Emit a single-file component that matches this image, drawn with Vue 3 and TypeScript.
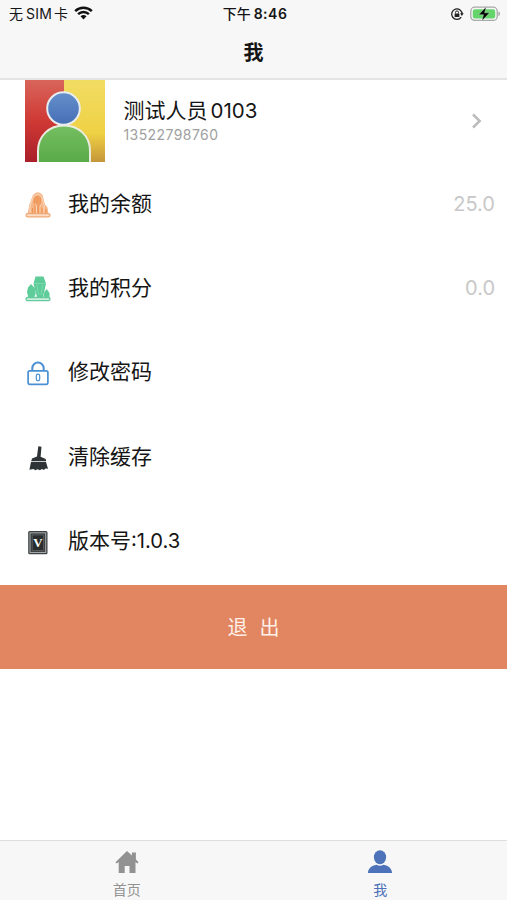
<script setup lang="ts">
interface Row {
  icon: 'balance' | 'points' | 'lock' | 'broom' | 'version'
  label: string
  suffix?: string
  value?: string
}

const rows: Row[] = [
  { icon: 'balance', label: '我的余额', value: '25.0' },
  { icon: 'points', label: '我的积分', value: '0.0' },
  { icon: 'lock', label: '修改密码' },
  { icon: 'broom', label: '清除缓存' },
  { icon: 'version', label: '版本号', suffix: ':1.0.3' },
]
</script>

<template>
  <div class="screen">
    <header class="header">
      <div class="status">
        <div class="carrier">
          <span>无</span><span class="sim">SIM</span><span>卡</span>
          <svg class="wifi" width="19" height="14" viewBox="0 0 19 14">
            <path d="M1.2 5.1a12 12 0 0 1 16.6 0M4.1 8.1a7.8 7.8 0 0 1 10.8 0" fill="none" stroke="#111" stroke-width="2.5" />
            <path d="M6.5 10.3a4.5 4.5 0 0 1 6 0L9.5 13.5z" fill="#111" />
          </svg>
        </div>
        <div class="time"><span>下午</span><b>8:46</b></div>
        <div class="indicators">
          <svg width="14" height="14" viewBox="0 0 14 14">
            <path d="M11.2 10.1A5.2 5.2 0 1 1 12.1 7.4" fill="none" stroke="#222" stroke-width="1.3" />
            <path d="M10.1 6.3h3.6l-1.8 2.8z" fill="#222" />
            <rect x="4.6" y="6.4" width="4.8" height="3.6" rx=".6" fill="#222" />
            <path d="M5.500 6.500V5.400a1.500 1.500 0 0 1 3 0v1.100" fill="none" stroke="#222" />
          </svg>
          <svg width="31" height="16" viewBox="0 0 31 16">
            <rect x=".8" y="1.200" width="26.400" height="13.200" rx="4" fill="#f7f7f7" stroke="#a9a9a9" stroke-width="1.300" />
            <rect x="2.800" y="3.200" width="22.400" height="9.200" rx="2.200" fill="#65d46b" />
            <path d="M28.400 5.500c2.200.5 2.200 4.100 0 4.600z" fill="#a9a9a9" />
            <path d="M16.300.8 8.700 8.700h4.800l-1.600 6.100 7.700-8h-5z" fill="#000" stroke="#d4f4d5" stroke-width=".4" />
          </svg>
        </div>
      </div>
      <h1 class="title">我</h1>
    </header>

    <main>
      <section class="profile">
        <svg class="avatar" width="80" height="82" viewBox="0 0 80 82">
          <defs>
            <linearGradient id="red" x2="0" y2="1"><stop stop-color="#d8655a" /><stop offset=".5" stop-color="#cf3934" /><stop offset="1" stop-color="#a91f29" /></linearGradient>
            <linearGradient id="gold" x2="0" y2="1"><stop stop-color="#f1dc63" /><stop offset=".65" stop-color="#efd144" /><stop offset="1" stop-color="#c4963a" /></linearGradient>
            <linearGradient id="blue" x2="0" y2="1"><stop stop-color="#6590cb" /><stop offset="1" stop-color="#456fb5" /></linearGradient>
            <linearGradient id="green" x2="0" y2="1"><stop stop-color="#75bf61" /><stop offset="1" stop-color="#59aa48" /></linearGradient>
          </defs>
          <rect width="39" height="82" fill="url(#red)" />
          <rect x="39" width="41" height="82" fill="url(#gold)" />
          <path d="M13 83V71c0-15 11-25.500 26-25.500S65 56 65 71v12z" fill="url(#green)" stroke="#e9ecdf" stroke-width="2" />
          <circle cx="38.500" cy="28.500" r="16.300" fill="url(#blue)" stroke="#e8edf0" stroke-width="2" />
        </svg>
        <div class="person">
          <div class="name"><span>测试人员</span><span class="digits">0103</span></div>
          <div class="phone">13522798760</div>
        </div>
        <svg class="chevron" width="12" height="18" viewBox="0 0 12 18">
          <path d="M2 2.500 8.700 9 2 15.500" fill="none" stroke="#bcbcbc" stroke-width="2.500" />
        </svg>
      </section>

      <section v-for="row in rows" :key="row.icon" class="row">
        <svg class="icon" width="26" height="28" viewBox="0 0 26 28">
          <template v-if="row.icon === 'balance'">
            <path d="M2.500 23.500 4.500 13 8 4q5-5.500 9.500 0l2.500 9.500 2.500 3 1 7z" fill="#f6b587" />
            <path d="M9 22V7q3.500-4.500 7 0v15z" fill="#f1a067" />
            <path d="M5 22v-7L8.500 5.500q4-4.500 8 0L19 14v8M11.500 22v-7l-1.500-2M15 22v-7l2-2" fill="none" stroke="#fbdcc4" stroke-width=".9" />
            <path d="M9.300 12V7M12.300 12V5M15.300 11V7M7.500 22v-5M13.300 22v-6M17 22v-5M20.700 22v-4" fill="none" stroke="#ee9556" stroke-width="1.200" />
            <rect x="1" y="22.700" width="24" height="3.200" rx="1.600" fill="#fbdcc6" stroke="#efa874" stroke-width="1.200" />
          </template>
          <template v-else-if="row.icon === 'points'">
            <path d="m10.500 1.500-2 7L12 22h6l3-13.500-2.500-7zM3 12.500 6 9l3.700 4 1 6-2 4H3.500L2 17zM19.300 17l2.400-3 2.800 4v5h-6z" fill="#5dcc99" />
            <path d="M9 8.500h11.500M12 10l1.500 10M17.500 10 16 20" fill="none" stroke="#8be0b9" stroke-width=".7" />
            <rect x="1" y="22.500" width="24" height="3.200" rx="1.600" fill="#c9f0df" stroke="#67ca9d" stroke-width="1.300" />
          </template>
          <template v-else-if="row.icon === 'lock'">
            <path d="M7.300 11.800V9.200a5.700 5.700 0 0 1 11.400 0v2.600" fill="none" stroke="#4a90d4" stroke-width="2" />
            <rect x="3.100" y="11.800" width="19.800" height="13.500" rx="1.700" fill="none" stroke="#4a90d4" stroke-width="1.700" />
            <rect x="11.300" y="15.200" width="3.400" height="6.600" rx="1.700" fill="none" stroke="#4a90d4" stroke-width="1.200" />
          </template>
          <template v-else-if="row.icon === 'broom'">
            <path d="m13.300 2.300 3.200.4-.9 10.100 5.100 2.100.5 2.300H6.200l.8-2.800 5-2z" fill="#2e3335" />
            <path d="M6 18h15l2 6.800-2.600-.4-1.500 1.500-2-1-2 1.400-2.200-1-2.400 1-1.800-1.200-4.100.6z" fill="#2e3335" />
          </template>
          <template v-else>
            <rect x="3.200" y="3" width="19.300" height="23.300" rx="1.500" fill="#3b3f40" />
            <rect x="5" y="4.800" width="15.700" height="19.700" fill="none" stroke="#a2a7a7" stroke-width="1.100" />
            <rect x="7.200" y="7" width="11.300" height="15.300" fill="#292d2e" stroke="#777" stroke-width=".5" />
            <text x="12.900" y="19.200" text-anchor="middle" class="v">V</text>
          </template>
        </svg>
        <span class="label">{{ row.label }}<span v-if="row.suffix" class="suffix">{{ row.suffix }}</span></span>
        <span v-if="row.value" class="value">{{ row.value }}</span>
      </section>

      <button class="logout"><span>退</span><span>出</span></button>
    </main>

    <nav class="tabs">
      <a class="tab">
        <svg width="26" height="26" viewBox="0 0 26 26">
          <path d="M13 2 1.500 13.300l1.300 1.200L4.700 13v11h6v-7h4.800v7h6V13l1.800 1.500 1.300-1.300-2.700-2.700V3.600h-4v2.800z" fill="#929292" />
        </svg>
        <span>首页</span>
      </a>
      <a class="tab active">
        <svg width="26" height="26" viewBox="0 0 26 26">
          <ellipse cx="13" cy="8.300" rx="6.100" ry="7" fill="#4d72b9" />
          <path d="M1 24c0-4.500 3.500-7.200 8.500-8.200q3.500 1.700 7 0c5 1 8.500 3.700 8.500 8.200z" fill="#4d72b9" />
        </svg>
        <span>我</span>
      </a>
    </nav>
  </div>
</template>

<style>
body {
  margin: 0;
  background: #fff;
}
</style>

<style scoped>
.screen {
  display: flex;
  flex-direction: column;
  width: 507px;
  height: 900px;
  overflow: hidden;
  background: #fff;
  color: #151515;
  font-family: Inter, "Noto Sans CJK SC", sans-serif;
}
.header {
  box-sizing: border-box;
  height: 80px;
  flex: none;
  background: #f7f7f7;
  border-bottom: 2px solid #e4e4e4;
}
.status {
  display: grid;
  grid-template-columns: 1fr auto 1fr;
  align-items: center;
  height: 28px;
  padding: 0 6px 0 9px;
  font-size: 14px;
  line-height: 28px;
}
.carrier,
.time,
.indicators {
  display: flex;
  align-items: center;
}
.sim {
  margin: 0 2px 0 3px;
  letter-spacing: 0.2px;
}
.wifi {
  margin: -2px 0 0 6px;
}
.time {
  gap: 3px;
  font-weight: 500;
}
.time b {
  font-weight: 600;
  letter-spacing: 0.5px;
}
.indicators {
  justify-content: flex-end;
  gap: 6px;
  margin-top: -1px;
}
.title {
  margin: 0;
  font-size: 20px;
  font-weight: 600;
  line-height: 51px;
  height: 50px;
  text-align: center;
}
.profile {
  display: flex;
  box-sizing: border-box;
  height: 83.5px;
  padding: 0 24px 0 25px;
}
.avatar {
  flex: none;
}
.person {
  flex: 1;
  margin-left: 18.5px;
  padding-top: 17px;
}
.name {
  display: flex;
  gap: 3px;
  font-size: 21px;
  line-height: 28px;
}
.digits {
  font-size: 20.5px;
}
.phone {
  color: #a0a0a0;
  font-size: 14px;
  letter-spacing: 0.42px;
  line-height: 20px;
}
.chevron {
  margin-top: 32px;
}
.row {
  display: flex;
  align-items: center;
  box-sizing: border-box;
  height: 84.3px;
  padding: 0 12px 4px 25px;
}
.icon {
  flex: none;
  margin: 2px 17px 0 0;
}
.label {
  flex: 1;
  font-size: 21px;
  line-height: 28px;
}
.suffix {
  font-size: 20.2px;
}
.value {
  color: #c8c8c8;
  font-size: 20px;
}
.v {
  fill: #fff;
  font: bold 13px "Liberation Serif", serif;
}
.logout {
  display: flex;
  align-items: center;
  justify-content: center;
  gap: 12px;
  width: 100%;
  height: 84px;
  padding: 0;
  border: 0;
  background: #e18661;
  color: #fff0e8;
  font: 20px Inter, "Noto Sans CJK SC", sans-serif;
}
.tabs {
  display: flex;
  box-sizing: border-box;
  height: 60px;
  flex: none;
  margin-top: auto;
  border-top: 1px solid #dedede;
  background: #f7f7f7;
}
.tab {
  display: flex;
  flex: 1;
  flex-direction: column;
  align-items: center;
  padding-top: 8px;
  color: #929292;
  font-size: 14px;
  line-height: 20px;
}
.tab svg {
  flex: none;
}
.tab span {
  margin-top: 5px;
}
.active {
  color: #4d72b9;
}
</style>
